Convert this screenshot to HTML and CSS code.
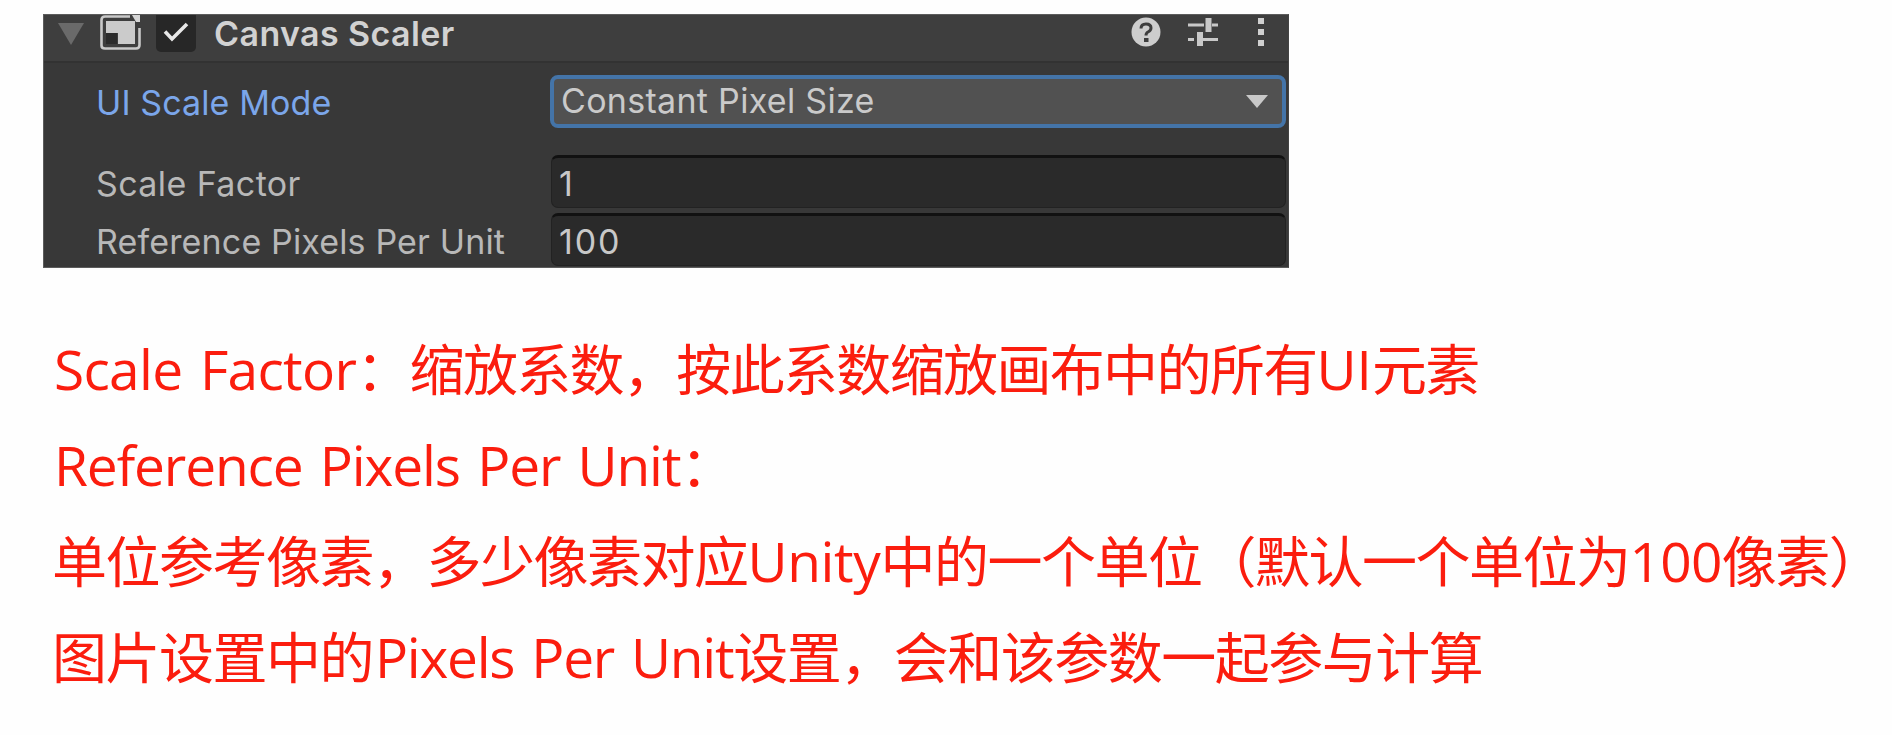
FILE: index.html
```html
<!DOCTYPE html>
<html lang="zh-CN">
<head>
<meta charset="utf-8">
<title>Canvas Scaler</title>
<link rel="stylesheet" href="styles.css">
</head>
<body>
<section class="inspector">
  <header class="head">
    <svg class="fold" width="26" height="22" viewBox="0 0 26 22"><path d="M0 0H26L13 22Z" fill="#6a6a6a"/></svg>
    <svg class="component" width="42" height="36" viewBox="0 0 42 36">
      <path d="M30 1.5H5Q1.5 1.5 1.5 5V30.500Q1.500 33.500 5 33.500H36Q39.500 33.500 39.500 30V13" fill="none" stroke="#c9c9c9" stroke-width="2.600"/>
      <path d="M6 6H35V29H18V18H6Z" fill="#cbcbcb"/>
      <path d="M6 18H17V29H6Z" fill="#2c2c2c"/>
      <path d="M32 0H40V7H36Z" fill="#d6d6d6"/>
    </svg>
    <span class="check"><svg width="26" height="20" viewBox="0 0 26 20"><path d="M2 9.500L9 17L24 2" fill="none" stroke="#e8e8e8" stroke-width="3.600"/></svg></span>
    <h1 class="title">Canvas Scaler</h1>
    <div class="tools">
      <svg width="30" height="30" viewBox="0 0 30 30"><circle cx="15" cy="15" r="14.500" fill="#cdcdcd"/><path d="M10 11.500Q10 7 15 7Q20 7 20 11Q20 13.500 17 15Q15 16 15 18.500" fill="none" stroke="#3d3d3d" stroke-width="3"/><rect x="13" y="21" width="4.500" height="4" fill="#3d3d3d"/></svg>
      <svg width="30" height="30" viewBox="0 0 30 30"><path d="M0 8H16M24 8H30M0 22.500H6M13 22.500H30" stroke="#c8c8c8" stroke-width="3"/><path d="M20.500 1V15M12 15V29" stroke="#c8c8c8" stroke-width="6"/></svg>
      <svg width="8" height="30" viewBox="0 0 8 30"><path d="M1 1H7V7H1ZM1 12H7V18H1ZM1 23H7V29H1Z" fill="#d0d0d0"/></svg>
    </div>
  </header>
  <div class="row mode">
    <span class="label">UI Scale Mode</span>
    <div class="dropdown"><span>Constant Pixel Size</span><svg width="22" height="13" viewBox="0 0 22 13"><path d="M0 0H22L11 13Z" fill="#c8c8c8"/></svg></div>
  </div>
  <div class="row factor">
    <span class="label">Scale Factor</span>
    <div class="field">1</div>
  </div>
  <div class="row ppu">
    <span class="label">Reference Pixels Per Unit</span>
    <div class="field">100</div>
  </div>
</section>
<section class="notes">
  <p class="lead"><span class="latin">Scale Factor</span>：缩放系数，按此系数缩放画布中的所有<span class="latin caps">UI</span>元素</p>
  <p class="lead"><span class="latin phrase">Reference Pixels Per Unit</span>：</p>
  <p>单位参考像素，多少像素对应<span class="latin word">Unity</span>中的一个单位（默认一个单位为<span class="latin">100</span>像素）</p>
  <p>图片设置中的<span class="latin inset">Pixels Per Unit</span>设置，会和该参数一起参与计算</p>
</section>
</body>
</html>
```
FILE: styles.css
```css
* { box-sizing: border-box; }
body { margin: 0; background: #fefefe; overflow: hidden; }
.inspector {
  margin: 14px 0 0 43px;
  width: 1246px;
  height: 254px;
  overflow: hidden;
  background: #383838;
  border: 1px solid #5c5c5c;
  border-right-color: #444;
  font-family: Inter, "Liberation Sans", sans-serif;
  font-size: 34px;
  color: #b8b8b8;
}
.head { display: flex; align-items: flex-start; height: 48px; background: #3e3e3e; border-bottom: 2px solid #323232; }
.fold { margin: 8px 0 0 14px; }
.component { margin-left: 16px; }
.check { display: flex; justify-content: center; align-items: center; width: 40px; height: 37px; margin-left: 14px; padding-bottom: 3px; background: #272727; border-radius: 0 0 5px 5px; }
.title { margin: -1px 0 0 18px; font-size: 34px; line-height: 40px; font-weight: 600; letter-spacing: 0.4px; color: #d2d2d2; white-space: nowrap; }
.tools { display: flex; align-items: flex-start; margin-left: auto; padding: 2px 23px 0 0; }
.tools svg + svg { margin-left: 27px; }
.tools svg:last-child { margin-left: 39px; }
.row { display: flex; height: 53px; line-height: 53px; white-space: nowrap; }
.mode { margin-top: 12px; }
.factor { margin-top: 27px; }
.ppu { margin-top: 5px; }
.label { width: 506px; padding-left: 52px; }
.mode .label { color: #7ba6ea; line-height: 56px; letter-spacing: 0.1px; }
.factor .label { line-height: 57px; letter-spacing: 0.4px; }
.ppu .label { line-height: 57px; letter-spacing: 0.15px; }
.dropdown { display: flex; align-items: center; justify-content: space-between; width: 736px; padding: 0 14px 0 8px; background: #515151; border: 4px solid #4474a8; border-radius: 8px; line-height: 46px; letter-spacing: 0.3px; color: #cacaca; }
.dropdown span { margin: -2px 0 0 -1px; }
.field { width: 735px; margin-left: 1px; padding-left: 7px; background: #2a2a2a; border: 1px solid #222; border-top: 3px solid #111; border-radius: 7px; line-height: 51px; letter-spacing: 1.8px; color: #c8c8c8; }
.notes {
  padding: 50px 0 0 52px;
  font-family: "Noto Sans CJK SC", sans-serif;
  font-size: 55px;
  letter-spacing: -1.5px;
  color: #fb1d0e;
}
.notes p { margin: 0; height: 96px; line-height: 96px; white-space: nowrap; }
.notes .lead { padding-left: 2px; letter-spacing: -1.65px; }
.latin { font-family: "Open Sans", "Noto Sans", sans-serif; font-size: 55px; letter-spacing: -0.7px; word-spacing: 4px; }
.phrase { letter-spacing: -1.1px; }
.word { letter-spacing: -0.4px; }
.caps { letter-spacing: 0; }
.inset { margin-left: 2px; letter-spacing: -1.25px; }
```
